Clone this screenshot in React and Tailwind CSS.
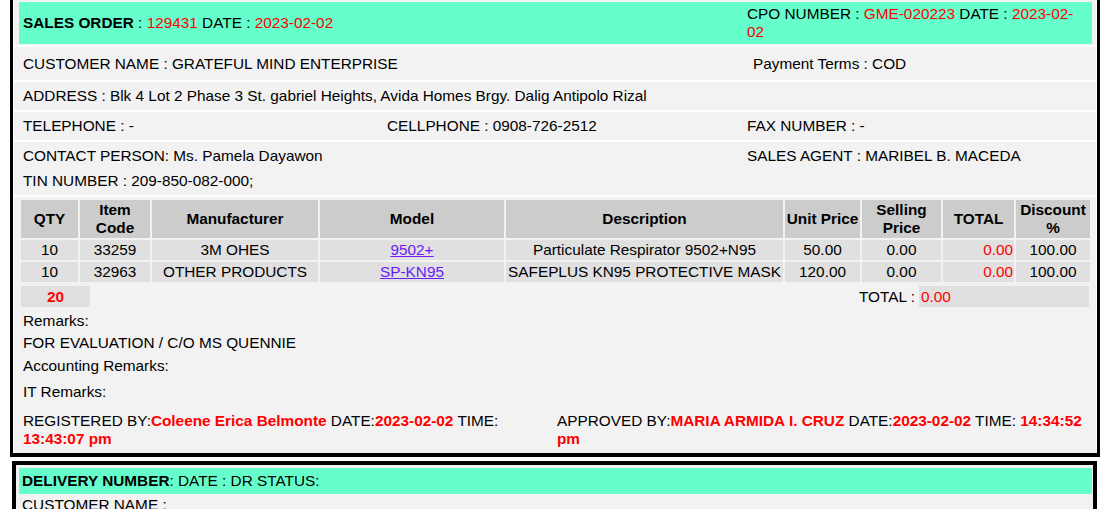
const items = [
  { qty: 10, code: '33259', mfr: '3M OHES', model: '9502+', desc: 'Particulate Respirator 9502+N95', unit: '50.00', sell: '0.00', total: '0.00', disc: '100.00' },
  { qty: 10, code: '32963', mfr: 'OTHER PRODUCTS', model: 'SP-KN95', desc: 'SAFEPLUS KN95 PROTECTIVE MASK', unit: '120.00', sell: '0.00', total: '0.00', disc: '100.00' },
]

const heads = ['QTY', 'Item Code', 'Manufacturer', 'Model', 'Description', 'Unit Price', 'Selling Price', 'TOTAL', 'Discount %']

function Red({ children, bold }) {
  return <span className={bold ? 'font-bold text-[#ff0000]' : 'text-[#ff0000]'}>{children}</span>
}

function Cell({ children, className = '' }) {
  return <div className={`flex h-[20px] items-center justify-center whitespace-nowrap bg-[#e0e0e0] px-[1px] ${className}`}>{children}</div>
}

export default function App() {
  return (
    <div className="h-[509px] w-[1109px] overflow-hidden bg-white font-['Liberation_Sans',Arial,sans-serif] text-[15.35px] leading-[normal] text-black">
      <div className="ml-[10px] flex w-[1090px] flex-col gap-[2px] border-x-[3px] border-b-[4px] border-black bg-white px-[1px]">
        <div className="bg-[#f2f2f2] pb-[1px] pl-[5px] pr-[4px] pt-[2px]">
          <div className="flex h-[42px] items-center bg-[#66ffcc] pl-[4px]">
            <div className="w-[724px] shrink-0"><b>SALES ORDER</b> : <Red>129431</Red> DATE : <Red>2023-02-02</Red></div>
            <div className="w-[341px]">CPO NUMBER : <Red>GME-020223</Red> DATE : <Red>2023-02-02</Red></div>
          </div>
        </div>
        <div className="flex h-[33px] items-center bg-[#f2f2f2] pl-[9px]">
          <div className="w-[730px] shrink-0">CUSTOMER NAME : GRATEFUL MIND ENTERPRISE</div>
          <div>Payment Terms : COD</div>
        </div>
        <div className="flex h-[28px] items-center bg-[#f2f2f2] pl-[9px]">
          ADDRESS : Blk 4 Lot 2 Phase 3 St. gabriel Heights, Avida Homes Brgy. Dalig Antipolo Rizal
        </div>
        <div className="flex h-[28px] items-center bg-[#f2f2f2] pl-[9px]">
          <div className="w-[364px] shrink-0">TELEPHONE : -</div>
          <div className="w-[360px] shrink-0">CELLPHONE : 0908-726-2512</div>
          <div>FAX NUMBER : -</div>
        </div>
        <div className="h-[53px] bg-[#f2f2f2] pl-[9px] pt-[5px]">
          <div className="flex">
            <div className="w-[724px] shrink-0">CONTACT PERSON: Ms. Pamela Dayawon</div>
            <div>SALES AGENT : MARIBEL B. MACEDA</div>
          </div>
          <div className="mt-[7px]">TIN NUMBER : 209-850-082-000;</div>
        </div>
        <div className="bg-[#f2f2f2] pb-[5px] pl-[7px] pr-[6px] pt-[3px]">
          <div className="grid grid-cols-[57px_70px_166px_184px_277px_75px_79px_71px_74px] gap-[2px]">
            {heads.map((h) => (
              <div key={h} className="flex h-[38px] items-center justify-center bg-[#cccccc] px-[1px] text-center font-bold">{h}</div>
            ))}
            {items.map((it) => [
              <Cell key={it.code + 'q'}>{it.qty}</Cell>,
              <Cell key={it.code + 'c'}>{it.code}</Cell>,
              <Cell key={it.code + 'm'}>{it.mfr}</Cell>,
              <Cell key={it.code + 'o'}><a className="text-[#6b1bf5] underline">{it.model}</a></Cell>,
              <Cell key={it.code + 'd'}>{it.desc}</Cell>,
              <Cell key={it.code + 'u'}>{it.unit}</Cell>,
              <Cell key={it.code + 's'}>{it.sell}</Cell>,
              <Cell key={it.code + 't'} className="justify-end"><Red>{it.total}</Red></Cell>,
              <Cell key={it.code + 'p'}>{it.disc}</Cell>,
            ])}
          </div>
          <div className="mr-[1px] mt-[4px] flex h-[21px] items-center">
            <div className="flex h-full w-[69px] items-center justify-center bg-[#e0e0e0]"><Red bold>20</Red></div>
            <div className="flex-1 pr-[4px] text-right">TOTAL :</div>
            <div className="flex h-full w-[170px] items-center bg-[#e0e0e0] pl-[2px]"><Red>0.00</Red></div>
          </div>
          <div className="pl-[2px]">
            <div className="mt-[5px]">Remarks:</div>
            <div className="mt-[4px]">FOR EVALUATION / C/O MS QUENNIE</div>
            <div className="mt-[5px]">Accounting Remarks:</div>
            <div className="mt-[8px]">IT Remarks:</div>
            <div className="mt-[11px] flex">
              <div className="w-[534px] shrink-0">REGISTERED BY:<Red bold>Coleene Erica Belmonte</Red> DATE:<Red bold>2023-02-02</Red> TIME: <Red bold>13:43:07 pm</Red></div>
              <div className="w-[533px]">APPROVED BY:<Red bold>MARIA ARMIDA I. CRUZ</Red> DATE:<Red bold>2023-02-02</Red> TIME: <Red bold>14:34:52 pm</Red></div>
            </div>
          </div>
        </div>
      </div>
      <div className="ml-[12px] mt-[4px] w-[1085px] border-[4px] border-black bg-[#f2f2f2] pl-[3px] pr-[1px] pt-[3px]">
        <div className="flex h-[26px] items-center bg-[#66ffcc] pl-[3px]">
          <span><b>DELIVERY NUMBER</b>: DATE : DR STATUS:</span>
        </div>
        <div className="mt-[2px] pl-[3px]">CUSTOMER NAME :</div>
        <div className="h-[40px]" />
      </div>
    </div>
  )
}
